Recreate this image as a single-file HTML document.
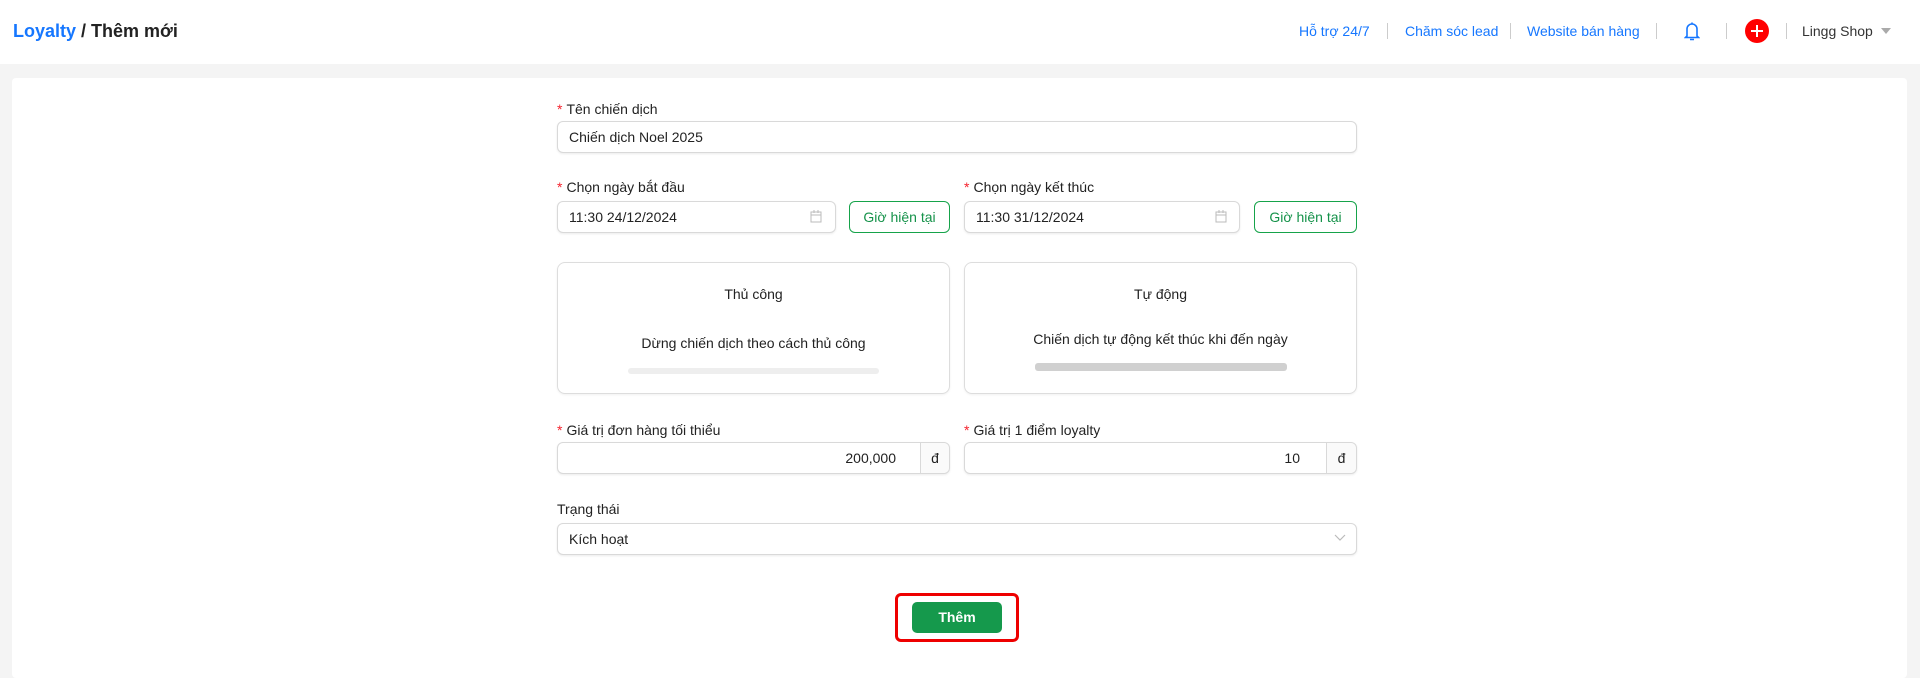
<!DOCTYPE html>
<html><head><meta charset="utf-8"><style>
*{box-sizing:border-box;margin:0;padding:0}
body{width:1920px;height:646px;background:#f4f4f4;font-family:"Liberation Sans",sans-serif;font-size:14px;color:#222;position:relative;overflow:hidden}
.a{position:absolute}
.hdr{left:0;top:0;width:1920px;height:64px;background:#fff}
.panel{left:12px;top:78px;width:1895px;height:600px;background:#fff;border-radius:4px}
.lbl{font-size:14px;color:#222;line-height:18px}
.lbl b{color:#f5222d;font-weight:normal;margin-right:4px}
.inp{border:1px solid #d9d9d9;border-radius:6px;background:#fff;height:32px;line-height:30px;padding:0 11px;box-shadow:0 1px 2px rgba(0,0,0,.08)}
.btn{border:1px solid #16a34a;border-radius:6px;color:#15924a;height:32px;line-height:30px;text-align:center;background:#fff}
.card{border:1px solid #ddd;border-radius:8px;height:132px;text-align:center;box-shadow:0 1px 2px rgba(0,0,0,.06)}
.lk{color:#1677ff;top:22px;line-height:18px}
.sep{top:23px;width:1px;height:16px;background:#ccc}
</style></head><body>
<div class="a hdr">
 <div class="a" style="left:13px;top:20px;font-size:18px;font-weight:bold;line-height:22px"><span style="color:#1677ff">Loyalty</span> / Thêm mới</div>
 <div class="a lk" style="left:1299px">Hỗ trợ 24/7</div>
 <div class="a sep" style="left:1387px"></div>
 <div class="a lk" style="left:1405px">Chăm sóc lead</div>
 <div class="a sep" style="left:1510px"></div>
 <div class="a lk" style="left:1527px">Website bán hàng</div>
 <div class="a sep" style="left:1656px"></div>
 <svg class="a" style="left:1684px;top:20px" width="16" height="22" viewBox="0 0 16 22"><path d="M3 16V9a5 5 0 0 1 10 0v7l1.5 1.5h-13z M8 4V2.5 M6 19.5h4" fill="none" stroke="#1677ff" stroke-width="1.6"/></svg>
 <div class="a sep" style="left:1726px"></div>
 <div class="a" style="left:1745px;top:19px;width:24px;height:24px;border-radius:50%;background:#f00"><div class="a" style="left:6px;top:11px;width:12px;height:2px;background:#fff"></div><div class="a" style="left:11px;top:6px;width:2px;height:12px;background:#fff"></div></div>
 <div class="a sep" style="left:1786px"></div>
 <div class="a" style="left:1802px;top:22px;line-height:18px;color:#333">Lingg Shop</div>
 <div class="a" style="left:1881px;top:28px;width:0;height:0;border-left:5px solid transparent;border-right:5px solid transparent;border-top:6px solid #aaa"></div>
</div>
<div class="a panel"></div>

<div class="a lbl" style="left:557px;top:100px"><b>*</b>Tên chiến dịch</div>
<div class="a inp" style="left:557px;top:121px;width:800px">Chiến dịch Noel 2025</div>

<div class="a lbl" style="left:557px;top:178px"><b>*</b>Chọn ngày bắt đầu</div>
<div class="a inp" style="left:557px;top:201px;width:279px">11:30 24/12/2024</div>
<div class="a btn" style="left:849px;top:201px;width:101px">Giờ hiện tại</div>
<div class="a lbl" style="left:964px;top:178px"><b>*</b>Chọn ngày kết thúc</div>
<div class="a inp" style="left:964px;top:201px;width:276px">11:30 31/12/2024</div>
<div class="a btn" style="left:1254px;top:201px;width:103px">Giờ hiện tại</div>
<svg class="a" style="left:810px;top:210px" width="12" height="13"><rect x="1" y="2" width="10" height="10" fill="none" stroke="#bbb"/><path d="M1 5h10M4 0v3M8 0v3" stroke="#bbb"/></svg>
<svg class="a" style="left:1215px;top:210px" width="12" height="13"><rect x="1" y="2" width="10" height="10" fill="none" stroke="#bbb"/><path d="M1 5h10M4 0v3M8 0v3" stroke="#bbb"/></svg>

<div class="a card" style="left:557px;top:262px;width:393px">
 <div style="margin-top:22px;line-height:18px">Thủ công</div>
 <div style="margin-top:31px;line-height:18px">Dừng chiến dịch theo cách thủ công</div>
 <div style="margin:16px auto 0;width:251px;height:6px;border-radius:3px;background:#eee"></div>
</div>
<div class="a card" style="left:964px;top:262px;width:393px">
 <div style="margin-top:22px;line-height:18px">Tự động</div>
 <div style="margin-top:27px;line-height:18px">Chiến dịch tự động kết thúc khi đến ngày</div>
 <div style="margin:15px auto 0;width:252px;height:8px;border-radius:3px;background:#d0d0d0"></div>
</div>

<div class="a lbl" style="left:557px;top:421px"><b>*</b>Giá trị đơn hàng tối thiểu</div>
<div class="a inp" style="left:557px;top:442px;width:393px;padding:0;display:flex"><div style="flex:1;text-align:right;padding-right:24px">200,000</div><div style="width:29px;border-left:1px solid #d9d9d9;background:#fafafa;text-align:center;border-radius:0 6px 6px 0">đ</div></div>
<div class="a lbl" style="left:964px;top:421px"><b>*</b>Giá trị 1 điểm loyalty</div>
<div class="a inp" style="left:964px;top:442px;width:393px;padding:0;display:flex"><div style="flex:1;text-align:right;padding-right:26px">10</div><div style="width:30px;border-left:1px solid #d9d9d9;background:#fafafa;text-align:center;border-radius:0 6px 6px 0">đ</div></div>

<div class="a lbl" style="left:557px;top:500px">Trạng thái</div>
<div class="a inp" style="left:557px;top:523px;width:800px">Kích hoạt</div>
<svg class="a" style="left:1334px;top:533px" width="12" height="10"><path d="M1 2l5 5 5-5" fill="none" stroke="#bbb" stroke-width="1.2"/></svg>

<div class="a" style="left:895px;top:593px;width:124px;height:49px;border:3px solid #e00;border-radius:6px"></div>
<div class="a" style="left:912px;top:602px;width:90px;height:31px;border-radius:5px;background:#15994c;color:#fff;text-align:center;line-height:31px;font-weight:bold">Thêm</div>
</body></html>
